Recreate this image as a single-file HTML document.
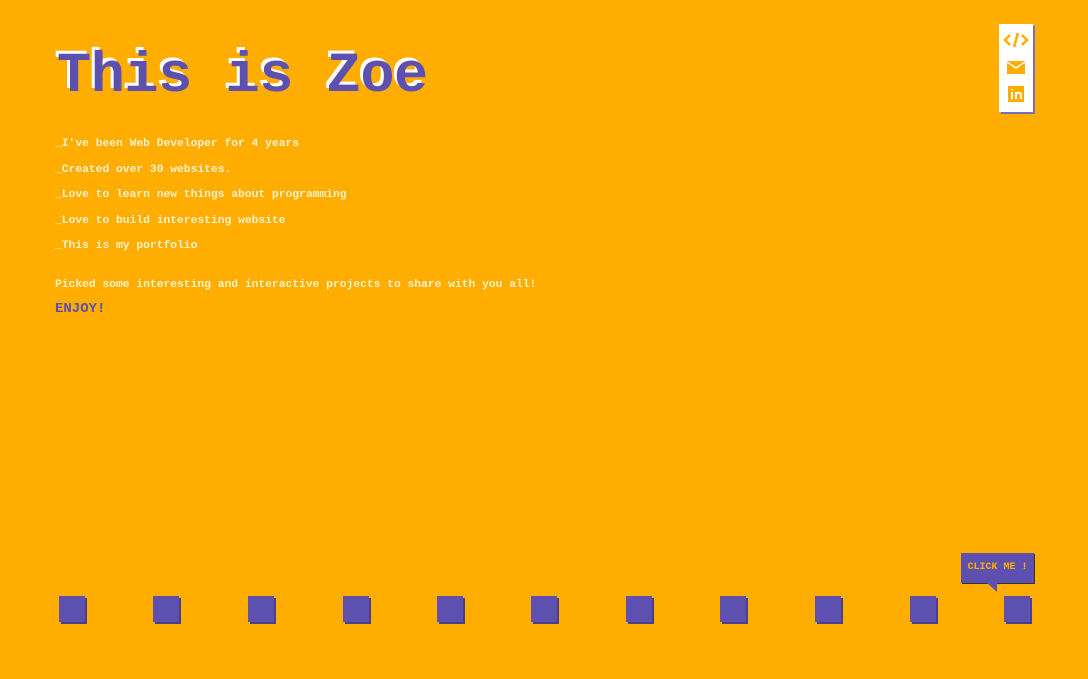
<!DOCTYPE html><html><head><style>
body{margin:0;width:1088px;height:679px;background:#FFAE00;overflow:hidden;position:relative;font-family:"Liberation Mono",monospace;}
h1{position:absolute;left:57px;top:45px;margin:0;font-size:57px;font-weight:bold;color:#5E50AF;text-shadow:-3px -3px 0 #fff;letter-spacing:-0.5px;white-space:pre}
.t{position:absolute;left:55px;font-size:11.3px;font-weight:bold;color:#FFF0C8;white-space:pre}
.sq{position:absolute;top:596px;width:26px;height:26px;background:#5E50AF;box-shadow:2px 2px 0 #4a3f8a}
.side{position:absolute;left:999px;top:24px;width:34px;height:88px;background:#fff;box-shadow:2px 2px 0 #7a6cc4}
.bub{position:absolute;left:961px;top:553px;width:73px;height:30px;background:#5E50AF;box-shadow:1px 1px 0 #333;color:#FFAE00;font-size:10px;font-weight:bold;line-height:30px;text-align:center}
.bub:after{content:"";position:absolute;left:26px;top:30px;border-left:10px solid transparent;border-top:9px solid #5E50AF}
</style></head><body>
<h1>This is Zoe</h1>
<div class="t" style="top:138px">_I've been Web Developer for 4 years</div>
<div class="t" style="top:164px">_Created over 30 websites.</div>
<div class="t" style="top:189px">_Love to learn new things about programming</div>
<div class="t" style="top:215px">_Love to build interesting website</div>
<div class="t" style="top:240px">_This is my portfolio</div>
<div class="t" style="top:279px">Picked some interesting and interactive projects to share with you all!</div>
<div class="t" style="top:301px;color:#5E50AF;font-size:14px">ENJOY!</div>
<div class="side">
<svg width="34" height="88" viewBox="0 0 34 88" fill="none" stroke="#FFAE00" stroke-width="2.5">
<path d="M11 11l-5 5 5 5M23 11l5 5-5 5M19 9l-4 14"/>
<rect x="8" y="37" width="18" height="13" fill="#FFAE00" stroke="none"/>
<path d="M8 38l9 6 9-6" stroke="#fff" stroke-width="1.5"/>
<rect x="9" y="62" width="16" height="16" fill="#FFAE00" stroke="none"/>
<path d="M13 68v7M13 65v1M17 75v-7M17 71c0-3 5-3 5 0v4" stroke="#fff" stroke-width="2"/>
</svg></div>
<div class="sq" style="left:59px"></div><div class="sq" style="left:153px"></div><div class="sq" style="left:248px"></div><div class="sq" style="left:343px"></div><div class="sq" style="left:437px"></div><div class="sq" style="left:531px"></div><div class="sq" style="left:626px"></div><div class="sq" style="left:720px"></div><div class="sq" style="left:815px"></div><div class="sq" style="left:910px"></div><div class="sq" style="left:1004px"></div>
<div class="bub">CLICK ME !</div>
</body></html>
